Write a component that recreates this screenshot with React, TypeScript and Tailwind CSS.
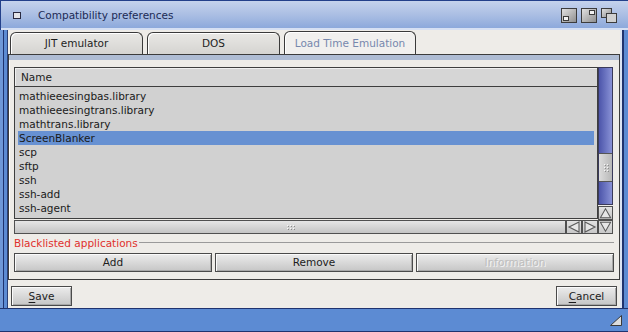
import type { ReactNode } from 'react';

const ROWS = [
  'mathieeesingbas.library',
  'mathieeesingtrans.library',
  'mathtrans.library',
  'ScreenBlanker',
  'scp',
  'sftp',
  'ssh',
  'ssh-add',
  'ssh-agent',
];

function Button({
  children,
  disabled,
  className = '',
}: {
  children: ReactNode;
  disabled?: boolean;
  className?: string;
}) {
  return (
    <div
      className={`flex items-center justify-center border border-[#4a4a4a] bg-gradient-to-b from-[#ececec] to-[#c6c6c6] shadow-[inset_1px_1px_0_#fafafa,inset_-1px_-1px_0_#a8a8a8] ${
        disabled
          ? 'text-[#bdbdbd] [text-shadow:1px_1px_0_#f4f4f4]'
          : 'text-[#1c1c1c]'
      } ${className}`}
    >
      {children}
    </div>
  );
}

function Tab({
  label,
  active,
  width,
}: {
  label: string;
  active?: boolean;
  width: string;
}) {
  return (
    <div
      className={`flex items-center justify-center rounded-t-[6px] border border-b-0 border-[#3a3a3a] ${width} ${
        active
          ? 'h-[23px] bg-[#f1f0ee] text-[#7788ad] shadow-[inset_1px_1px_0_#ffffff]'
          : 'h-[22px] bg-gradient-to-b from-[#e9e8e5] to-[#d5d4d1] text-[#1e1e1e] shadow-[inset_1px_1px_0_#ffffff]'
      }`}
    >
      {label}
    </div>
  );
}

function ArrowBox({
  dir,
  className = '',
}: {
  dir: 'up' | 'down' | 'left' | 'right';
  className?: string;
}) {
  const points = {
    up: '1.5,11 7,1.5 12.5,11',
    down: '1.5,1 7,10.5 12.5,1',
    left: '12,1 2,6 12,11',
    right: '2,1 12,6 2,11',
  }[dir];

  return (
    <div
      className={`flex items-center justify-center border border-[#505050] bg-gradient-to-b from-[#e2e2e2] to-[#c8c8c8] ${className}`}
    >
      <svg width="14" height="12" viewBox="0 0 14 12">
        <polygon
          points={points}
          fill="#e6e6e6"
          stroke="#5a5a5a"
          strokeWidth="1.1"
        />
      </svg>
    </div>
  );
}

function Grip({ cols, rows }: { cols: number; rows: number }) {
  return (
    <div
      className="grid gap-[2px]"
      style={{ gridTemplateColumns: `repeat(${cols}, 1px)` }}
    >
      {Array.from({ length: cols * rows }).map((_, i) => (
        <div key={i} className="h-[1px] w-[1px] bg-[#f8f8f8] shadow-[1px_1px_0_#8a8a8a]" />
      ))}
    </div>
  );
}

function TitleGadget({ kind }: { kind: 'iconify' | 'zoom' | 'depth' }) {
  return (
    <svg width="16" height="15" viewBox="0 0 16 15">
      <defs>
        <linearGradient id={`g-${kind}`} x1="0" y1="0" x2="1" y2="1">
          <stop offset="0" stopColor="#e4e4e4" />
          <stop offset="1" stopColor="#8c8c8c" />
        </linearGradient>
      </defs>
      {kind === 'depth' ? (
        <>
          <rect x="0.5" y="0.5" width="10" height="9" fill="url(#g-depth)" stroke="#3c3c3c" />
          <rect x="5.5" y="5.5" width="10" height="9" fill="#d0d0d0" stroke="#3c3c3c" />
        </>
      ) : (
        <>
          <rect x="0.5" y="0.5" width="15" height="14" fill={`url(#g-${kind})`} stroke="#3c3c3c" />
          {kind === 'iconify' ? (
            <rect x="2.5" y="8.5" width="5" height="4" fill="#f2f2f2" stroke="#3c3c3c" />
          ) : (
            <rect x="8.5" y="2.5" width="5" height="4" fill="#f2f2f2" stroke="#3c3c3c" />
          )}
        </>
      )}
    </svg>
  );
}

export default function App() {
  return (
    <div className="flex h-[332px] w-[628px] flex-col overflow-hidden bg-[#5c8bd3] font-['DejaVu_Sans',sans-serif] text-[10.5px] leading-none">
      {/* title bar */}
      <div className="flex h-[30px] shrink-0 items-center border-t border-l border-[#23408a] bg-gradient-to-b from-[#c5d3ec] via-[#a9bde3] to-[#88a6da] pr-[11px] pl-[12px] shadow-[inset_0_-2px_0_#d6e0f3]">
        <div className="h-[7px] w-[8px] border border-[#2a2a40] bg-[#e4e4e8]" />
        <span className="ml-[17px] text-[#1b2a55]">
          Compatibility preferences
        </span>
        <div className="ml-auto flex items-center gap-[4px]">
          <TitleGadget kind="iconify" />
          <TitleGadget kind="zoom" />
          <TitleGadget kind="depth" />
        </div>
      </div>

      <div className="flex min-h-0 flex-1">
        {/* left frame */}
        <div className="flex w-[8px] shrink-0">
          <div className="w-[3px] bg-[#6f98d8]" />
          <div className="w-[1px] bg-[#1f336f]" />
          <div className="w-[3px] bg-[#5c8bd3]" />
          <div className="w-[1px] bg-[#2a3f78]" />
        </div>

        {/* window body */}
        <div className="flex min-w-0 flex-1 flex-col bg-[#eeece8]">
          {/* tabs */}
          <div className="flex h-[24px] items-end gap-[4px] pl-[2px]">
            <Tab label="JIT emulator" width="w-[133px]" />
            <Tab label="DOS" width="w-[133px]" />
            <Tab label="Load Time Emulation" width="w-[132px]" active />
          </div>

          {/* tab panel */}
          <div className="flex flex-col border border-[#3c3c3c] shadow-[inset_1px_0_0_#ffffff]">
            <div className="h-[5px] bg-[#aebcd4]" />
            <div className="flex flex-col pt-[7px] pr-[5px] pl-[5px]">
              {/* list + scrollbars */}
              <div className="flex h-[167px]">
                <div className="flex w-[584px] flex-col">
                  <div className="flex h-[152px] flex-col border border-[#3e3e3e] bg-[#d1d1d1]">
                    <div className="flex h-[19px] shrink-0 items-center border-b border-[#3e3e3e] bg-[#d6d6d6] pl-[6px] text-[#1c1c1c] shadow-[inset_1px_1px_0_#f0f0f0]">
                      Name
                    </div>
                    <div className="flex flex-col pt-[2px] pr-[3px] pl-[3px]">
                      {ROWS.map((row) => (
                        <div
                          key={row}
                          className={`flex h-[14px] items-center pl-[1px] text-[#1a1a1a] ${
                            row === 'ScreenBlanker' ? 'bg-[#6791d2]' : ''
                          }`}
                        >
                          {row}
                        </div>
                      ))}
                    </div>
                  </div>
                  <div className="mt-[1px] flex h-[14px]">
                    <div className="flex flex-1 items-center justify-center border border-[#505050] bg-gradient-to-b from-[#e6e6e6] to-[#c4c4c4]">
                      <Grip cols={3} rows={2} />
                    </div>
                    <ArrowBox dir="left" className="w-[16px]" />
                    <ArrowBox dir="right" className="w-[16px]" />
                  </div>
                </div>

                <div className="flex w-[15px] flex-col">
                  <div className="flex flex-1 flex-col border border-[#3a3a5a] bg-gradient-to-r from-[#4d55aa] to-[#8a92d6]">
                    <div className="h-[85px]" />
                    <div className="flex h-[29px] items-center justify-center border-y border-[#555555] bg-gradient-to-r from-[#dcdcdc] to-[#b8b8b8]">
                      <Grip cols={2} rows={3} />
                    </div>
                  </div>
                  <ArrowBox dir="up" className="mt-[1px] h-[14px]" />
                  <ArrowBox dir="down" className="h-[14px]" />
                </div>
              </div>

              {/* group label */}
              <div className="mt-[3px] flex h-[12px] items-center">
                <span className="text-[#e0302c]">Blacklisted applications</span>
                <div className="ml-[1px] h-[2px] flex-1 border-t border-[#9a9a9a] border-b-white" />
              </div>

              {/* actions */}
              <div className="mt-[4px] flex h-[19px] gap-[3px]">
                <Button className="flex-1">Add</Button>
                <Button className="flex-1">Remove</Button>
                <Button className="flex-1" disabled>
                  Information
                </Button>
              </div>
              <div className="h-[7px]" />
            </div>
          </div>

          {/* footer */}
          <div className="flex items-start justify-between px-[3px] pt-[6px]">
            <Button className="h-[20px] w-[61px]">
              <span className="underline underline-offset-2">S</span>ave
            </Button>
            <Button className="h-[20px] w-[61px]">
              <span className="underline underline-offset-2">C</span>ancel
            </Button>
          </div>
        </div>

        {/* right frame */}
        <div className="flex w-[8px] shrink-0">
          <div className="w-[2px] bg-[#dbe4f4]" />
          <div className="w-[2px] bg-[#1f336f]" />
          <div className="w-[4px] bg-[#5c8bd3]" />
        </div>
      </div>

      {/* bottom frame */}
      <div className="flex h-[24px] shrink-0 items-end justify-end border-t border-b border-[#1f336f] pr-[6px] pb-[5px]">
        <svg width="12" height="11" viewBox="0 0 12 11">
          <polygon points="11.5,0.5 11.5,10.5 0.5,10.5" fill="#dcdcdc" stroke="#3a3a3a" />
        </svg>
      </div>
    </div>
  );
}
